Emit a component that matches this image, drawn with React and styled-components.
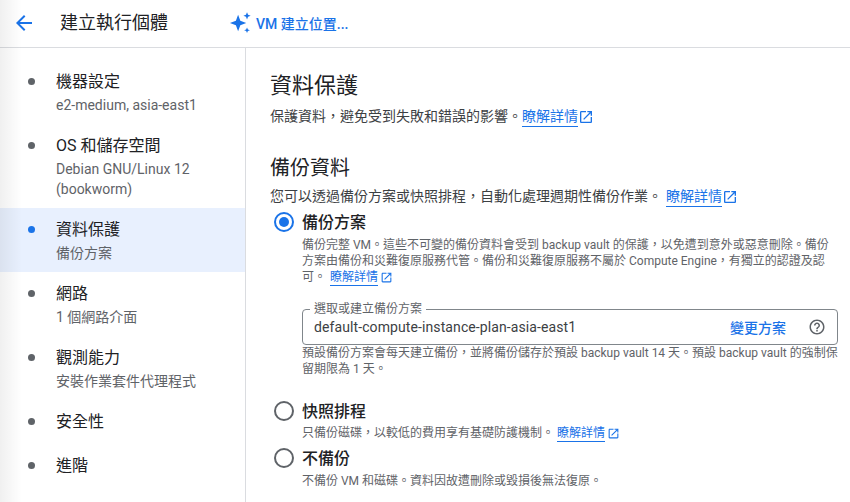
import React from "react";
import styled, { createGlobalStyle } from "styled-components";

const GlobalStyle = createGlobalStyle`
  html, body {
    margin: 0;
    height: 100%;
    background: #fff;
    overflow: hidden;
  }
  * {
    box-sizing: border-box;
  }
  body {
    font-family: Roboto, "Noto Sans CJK TC", sans-serif;
    color: #202124;
  }
`;

const Page = styled.div`
  position: relative;
  width: 850px;
  height: 502px;
  overflow: hidden;
  display: flex;
  flex-direction: column;

  &::before {
    content: "";
    position: absolute;
    top: 0;
    left: 0;
    bottom: 0;
    width: 22px;
    background: linear-gradient(to right, rgba(0, 0, 0, 0.06), rgba(0, 0, 0, 0));
    pointer-events: none;
  }
`;

const Header = styled.header`
  height: 48px;
  flex: none;
  display: flex;
  align-items: center;
  border-bottom: 1px solid #dadce0;
  padding: 0 0 1px 12px;
`;

const BackButton = styled.div`
  width: 24px;
  height: 24px;
  color: #1a73e8;
  margin-right: 24px;
`;

const PageTitle = styled.h1`
  margin: 0;
  font-size: 18px;
  font-weight: 400;
  line-height: 24px;
  width: 169px;
`;

const HelperButton = styled.div`
  display: flex;
  align-items: center;
  gap: 4px;
  font-size: 14px;
  font-weight: 500;
  color: #1a73e8;
`;

const Body = styled.div`
  flex: 1;
  display: flex;
  min-height: 0;
`;

const Sidebar = styled.nav`
  width: 246px;
  flex: none;
  border-right: 1px solid #dadce0;
  padding-top: 12px;
`;

const NavItem = styled.div`
  display: flex;
  padding: 10px 16px ${(p) => (p.$bare ? "10px" : "9px")} 28px;
  background: ${(p) => (p.$active ? "#e8f0fe" : "transparent")};
`;

const NavDot = styled.span`
  width: 7px;
  height: 7px;
  border-radius: 50%;
  flex: none;
  margin: 8px 21px 0 0;
  background: ${(p) => (p.$active ? "#1a73e8" : "#5f6368")};
`;

const NavText = styled.div`
  min-width: 0;
`;

const NavTitle = styled.div`
  font-size: 16px;
  line-height: 24px;
`;

const NavSub = styled.div`
  font-size: 14px;
  line-height: 20px;
  margin-top: 1px;
  color: #5f6368;
`;

const Main = styled.main`
  flex: 1;
  padding: 24px 12px 0 24px;
  min-width: 0;
`;

const Heading = styled.h2`
  margin: 0;
  font-size: 22px;
  font-weight: 400;
  line-height: 28px;
`;

const SubHeading = styled.h3`
  margin: 27px 0 0;
  font-size: 20px;
  font-weight: 400;
  line-height: 28px;
`;

const Lead = styled.p`
  margin: ${(p) => p.$top || "6px"} 0 0;
  font-size: 14px;
  line-height: 20px;
  color: #3c4043;
`;

const LearnLink = styled.a`
  display: inline-flex;
  align-items: center;
  gap: ${(p) => (p.$small ? "2px" : "0")};
  color: #1a73e8;
  font-size: ${(p) => (p.$small ? "12px" : "14px")};
  margin-left: ${(p) => p.$gap || "0"};
  vertical-align: top;
  line-height: inherit;
`;

const LinkLabel = styled.span`
  border-bottom: 1px solid #1a73e8;
  height: ${(p) => (p.$small ? "17px" : "21px")};
`;

const RadioRow = styled.div`
  display: flex;
  margin: ${(p) => p.$top || "0"} 0 0 4px;
`;

const RadioMark = styled.span`
  width: 20px;
  height: 20px;
  flex: none;
  margin: 0 8px 0 0;
  border-radius: 50%;
  border: 2px solid ${(p) => (p.$on ? "#1a73e8" : "#5f6368")};
  display: flex;
  align-items: center;
  justify-content: center;

  &::after {
    content: "";
    width: 10px;
    height: 10px;
    border-radius: 50%;
    background: ${(p) => (p.$on ? "#1a73e8" : "transparent")};
  }
`;

const RadioBody = styled.div`
  flex: 1;
  min-width: 0;
`;

const RadioLabel = styled.div`
  font-size: 16px;
  font-weight: 500;
  line-height: 22px;
`;

const Description = styled.div`
  font-size: 12px;
  line-height: 16px;
  color: #5f6368;
  margin-top: ${(p) => p.$top || "3px"};
`;

const Field = styled.div`
  position: relative;
  height: 36px;
  margin-top: 23px;
  display: flex;
  align-items: center;
  padding: 0 11px 0 11px;
  border: 1px solid #80868b;
  border-radius: 4px;
`;

const FieldLabel = styled.span`
  position: absolute;
  top: -8px;
  left: 7px;
  padding: 0 4px;
  background: #fff;
  font-size: 12px;
  line-height: 14px;
  color: #5f6368;
`;

const FieldValue = styled.span`
  flex: 1;
  font-size: 14px;
  line-height: 20px;
  color: #3c4043;
  letter-spacing: 0.1px;
`;

const ChangeButton = styled.span`
  font-size: 14px;
  font-weight: 500;
  color: #1a73e8;
  margin-right: 22px;
`;

const HelpIcon = styled.svg`
  width: 18px;
  height: 18px;
  fill: #5f6368;
`;

const BackArrow = () => (
  <svg viewBox="0 0 24 24" width="24" height="24" fill="currentColor">
    <path d="M20 11H7.83l5.59-5.59L12 4l-8 8 8 8 1.41-1.41L7.83 13H20v-2z" />
  </svg>
);

const Sparkle = () => (
  <svg viewBox="0 0 24 24" width="23" height="24" fill="#1a73e8">
    <path d="M9.5 3.5l2.3 6.2 6.2 2.3-6.2 2.3-2.3 6.2-2.3-6.2L1 12l6.2-2.3z" />
    <path d="M18.8.7l1.1 2.7 2.7 1.1-2.7 1.1-1.1 2.7-1.1-2.7-2.7-1.1 2.7-1.1z" />
    <path d="M18.8 16.6l.9 2.1 2.1.8-2.1.8-.9 2.1-.9-2.1-2.1-.8 2.1-.8z" />
  </svg>
);

const OpenInNew = ({ size = 16 }) => (
  <svg viewBox="0 0 24 24" width={size} height={size} fill="#1a73e8">
    <path d="M19 19H5V5h7V3H5c-1.11 0-2 .9-2 2v14c0 1.1.89 2 2 2h14c1.1 0 2-.9 2-2v-7h-2v7zM14 3v2h3.59l-9.83 9.83 1.41 1.41L19 6.41V10h2V3h-7z" />
  </svg>
);

const navItems = [
  { title: "機器設定", sub: "e2-medium, asia-east1" },
  { title: "OS 和儲存空間", sub: "Debian GNU/Linux 12 (bookworm)" },
  { title: "資料保護", sub: "備份方案", active: true },
  { title: "網路", sub: "1 個網路介面" },
  { title: "觀測能力", sub: "安裝作業套件代理程式" },
  { title: "安全性" },
  { title: "進階" },
];

const App = () => {
  return (
    <Page>
      <GlobalStyle />
      <Header>
        <BackButton>
          <BackArrow />
        </BackButton>
        <PageTitle>建立執行個體</PageTitle>
        <HelperButton>
          <Sparkle />
          VM 建立位置...
        </HelperButton>
      </Header>
      <Body>
        <Sidebar>
          {navItems.map((item) => (
            <NavItem key={item.title} $active={item.active} $bare={!item.sub}>
              <NavDot $active={item.active} />
              <NavText>
                <NavTitle>{item.title}</NavTitle>
                {item.sub && <NavSub>{item.sub}</NavSub>}
              </NavText>
            </NavItem>
          ))}
        </Sidebar>
        <Main>
          <Heading>資料保護</Heading>
          <Lead>
            保護資料，避免受到失敗和錯誤的影響。
            <LearnLink>
              <LinkLabel>瞭解詳情</LinkLabel>
              <OpenInNew />
            </LearnLink>
          </Lead>
          <SubHeading>備份資料</SubHeading>
          <Lead $top="4px">
            您可以透過備份方案或快照排程，自動化處理週期性備份作業。
            <LearnLink $gap="4px">
              <LinkLabel>瞭解詳情</LinkLabel>
              <OpenInNew />
            </LearnLink>
          </Lead>
          <RadioRow $top="5px">
            <RadioMark $on />
            <RadioBody>
              <RadioLabel>備份方案</RadioLabel>
              <Description>
                備份完整 VM。這些不可變的備份資料會受到 backup vault 的保護，以免遭到意外或惡意刪除。備份方案由備份和災難復原服務代管。備份和災難復原服務不屬於 Compute Engine，有獨立的認證及認可。
                <LearnLink $small $gap="4px">
                  <LinkLabel $small>瞭解詳情</LinkLabel>
                  <OpenInNew size={13} />
                </LearnLink>
              </Description>
              <Field>
                <FieldLabel>選取或建立備份方案</FieldLabel>
                <FieldValue>default-compute-instance-plan-asia-east1</FieldValue>
                <ChangeButton>變更方案</ChangeButton>
                <HelpIcon viewBox="0 0 24 24">
                  <path d="M11 18h2v-2h-2v2zm1-16C6.48 2 2 6.48 2 12s4.48 10 10 10 10-4.48 10-10S17.52 2 12 2zm0 18c-4.41 0-8-3.59-8-8s3.59-8 8-8 8 3.59 8 8-3.59 8-8 8zm0-14c-2.21 0-4 1.79-4 4h2c0-1.1.9-2 2-2s2 .9 2 2c0 2-3 1.75-3 5h2c0-2.25 3-2.5 3-5 0-2.21-1.79-4-4-4z" />
                </HelpIcon>
              </Field>
              <Description $top="0">
                預設備份方案會每天建立備份，並將備份儲存於預設 backup vault 14 天。預設 backup vault 的強制保留期限為 1 天。
              </Description>
            </RadioBody>
          </RadioRow>
          <RadioRow $top="24px">
            <RadioMark />
            <RadioBody>
              <RadioLabel>快照排程</RadioLabel>
              <Description $top="2px">
                只備份磁碟，以較低的費用享有基礎防護機制。
                <LearnLink $small $gap="3px">
                  <LinkLabel $small>瞭解詳情</LinkLabel>
                  <OpenInNew size={13} />
                </LearnLink>
              </Description>
            </RadioBody>
          </RadioRow>
          <RadioRow $top="6px">
            <RadioMark />
            <RadioBody>
              <RadioLabel>不備份</RadioLabel>
              <Description>不備份 VM 和磁碟。資料因故遭刪除或毀損後無法復原。</Description>
            </RadioBody>
          </RadioRow>
        </Main>
      </Body>
    </Page>
  );
};

export default App;
